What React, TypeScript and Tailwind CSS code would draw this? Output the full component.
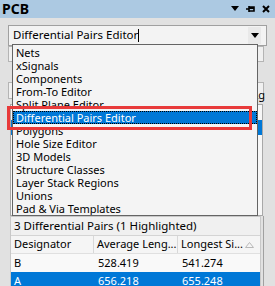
import React from 'react';

const items = [
  'Nets',
  'xSignals',
  'Components',
  'From-To Editor',
  'Split Plane Editor',
  'Differential Pairs Editor',
  'Polygons',
  'Hole Size Editor',
  '3D Models',
  'Structure Classes',
  'Layer Stack Regions',
  'Unions',
  'Pad & Via Templates',
];

const rows = [
  { d: 'B', avg: '528.419', longest: '541.274', sel: false },
  { d: 'A', avg: '656.218', longest: '655.248', sel: true },
];

const App = () => {
  return (
    <div
      className="relative w-[275px] h-[286px] overflow-hidden bg-[#e1e1e1] text-[11px] text-black whitespace-nowrap"
      style={{ fontFamily: '"Noto Sans", "Open Sans", sans-serif' }}
    >
      {/* title bar */}
      <div className="h-[18px] flex items-center justify-between pl-[2px] pr-[5px] bg-[#acc9e2]">
        <span className="text-[14px] font-bold leading-none">PCB</span>
        <div className="flex items-center gap-[7px]">
          <svg width="8" height="6" viewBox="0 0 8 6">
            <path d="M0 0h8L4 5z" fill="#000" />
          </svg>
          <svg width="9" height="8" viewBox="0 0 9 8">
            <path d="M0 4h3M3 1v6M3 2h5v4H3" stroke="#000" strokeWidth="1.6" fill="none" />
            <rect x="3" y="2" width="5" height="2" fill="#000" />
          </svg>
          <svg width="8" height="8" viewBox="0 0 8 8">
            <path d="M1 1l6 6M7 1L1 7" stroke="#000" strokeWidth="2" />
          </svg>
        </div>
      </div>

      {/* combobox */}
      <div className="mx-[8px] mt-[7px] h-[21px] flex items-center border border-[#a0a0a0] bg-[#f3f3f3] text-[11.5px]">
        <span className="pl-[4px] flex-1 leading-none">
          Differential Pairs Editor<span className="inline-block w-px h-[13px] bg-black align-middle"></span>
        </span>
        <div className="w-[13px] h-[17px] mr-[5px] flex items-center justify-center bg-[#e9e9e9]">
          <svg width="8" height="5" viewBox="0 0 8 5">
            <path d="M0 0h8L4 5z" fill="#000" />
          </svg>
        </div>
      </div>

      {/* panel content under the dropdown */}
      <div className="h-[170px] flex flex-col">
        <div className="ml-[8px] mr-[11px] h-[16px] border border-[#b4b4b4] bg-[#f0f0f0]"></div>
        <div className="ml-[8px] mr-[11px] mt-[20px] h-[17px] border border-[#b4b4b4] bg-[#f0f0f0]"></div>
        <div className="mt-[-11px] pr-[10px] text-right leading-[14px]">Highlighting</div>
        <div className="ml-[10px] mr-[12px] mt-[2px] flex-1 border border-[#a8a8a8] bg-[#f7f7f7] flex flex-col">
          <div className="h-[15px]"></div>
          <div className="h-[15px] bg-[#0078d7]"></div>
        </div>
      </div>

      {/* table */}
      <div className="flex">
        <div className="ml-[10px] w-[251px] border-l border-t border-r border-[#c8c8c8]">
          <div className="h-[19px] flex items-center pl-[3px] bg-[#f0f0f0] border-b border-[#d4d4d4] text-[11.5px]">
            3 Differential Pairs (1 Highlighted)
          </div>
          <div className="h-[18px] flex items-center bg-[#f5f5f5] border-b border-[#e0e0e0]">
            <div className="w-[83px] pl-[3px] border-r border-[#d8d8d8] h-full flex items-center overflow-hidden">Designator</div>
            <div className="w-[84px] pl-[3px] border-r border-[#d8d8d8] h-full flex items-center overflow-hidden">Average Leng...</div>
            <div className="flex-1 pl-[3px] h-full flex items-center justify-between pr-[6px] overflow-hidden">
              <span>Longest Si...</span>
              <svg width="9" height="6" viewBox="0 0 9 6">
                <path d="M4.5 0.5L8.5 5.5H0.5z" fill="none" stroke="#b8b8b8" />
              </svg>
            </div>
          </div>
          {rows.map((r) => (
            <div
              key={r.d}
              className={
                r.sel
                  ? 'h-[18px] flex items-center bg-[#0078d7] text-white'
                  : 'h-[18px] flex items-center bg-[#f9f9f9]'
              }
            >
              <div className="w-[84px] pl-[3px]">{r.d}</div>
              <div className="w-[84px] pl-[3px]">{r.avg}</div>
              <div className="flex-1 pl-[3px]">{r.longest}</div>
            </div>
          ))}
        </div>
        <div className="ml-[2px] w-px h-[80px] bg-[#a0a0a0]"></div>
      </div>

      {/* dropdown list overlay */}
      <div className="absolute left-[12px] top-[44px] w-[246px] h-[172px] border border-[#646464] bg-[#f4f4f4] pt-[1px] overflow-hidden">
        {items.map((it) => {
          const sel = it === 'Differential Pairs Editor';
          return (
            <div
              key={it}
              className={
                sel
                  ? 'h-[13px] flex items-center pl-[2px] bg-[#0078d7] text-white border border-dotted border-black leading-[11px]'
                  : 'h-[13px] flex items-center pl-[3px] leading-[13px]'
              }
            >
              {it}
            </div>
          );
        })}
      </div>

      {/* red annotation box */}
      <div className="absolute left-[7px] top-[106px] w-[245px] h-[24px] border-[3px] border-[#e83a3a]"></div>
    </div>
  );
};

export default App;
